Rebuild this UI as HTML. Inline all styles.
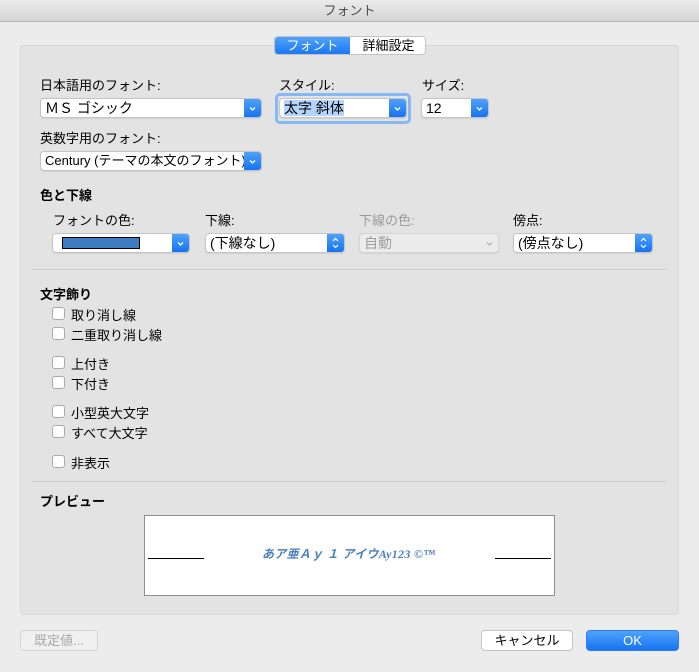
<!DOCTYPE html>
<html><head><meta charset="utf-8"><style>
*{margin:0;padding:0;box-sizing:border-box}
body{width:699px;height:672px;background:#ececec;font-family:"Liberation Sans","Noto Sans CJK JP",sans-serif;font-size:13px;color:#000;position:relative;overflow:hidden}
.a{position:absolute;white-space:nowrap}
.title{left:0;top:0;width:699px;height:22px;background:linear-gradient(#ebebeb,#d6d6d6);border-bottom:1px solid #b5b5b5;text-align:center;line-height:22px;color:#4d4d4d}
.group{left:20px;top:45px;width:659px;height:570px;background:#e3e3e3;border:1px solid #d8d8d8;border-radius:4px}
.sel{position:absolute;height:20px;background:#fff;border:1px solid #c4c4c4;border-radius:4px;line-height:18px;padding-left:4px;overflow:hidden;box-shadow:0 1px 1px rgba(0,0,0,.08);font-size:14px}
.arr{position:absolute;right:0;top:0;width:17px;height:100%;background:linear-gradient(#4fa2fb,#1673f2)}
.arr svg{position:absolute;left:4px;top:5px}
.b{font-weight:bold}
.cb{position:absolute;left:52px;width:13px;height:13px;background:#fff;border:1px solid #aaa;border-radius:3px}
.cl{position:absolute;left:71px}
.sep{position:absolute;left:32px;width:634px;height:1px;background:#cdcdcd}
.btn{position:absolute;height:21px;border:1px solid #c4c4c4;border-radius:4px;background:#fff;text-align:center;line-height:19px}
</style></head><body>
<div class="a title">フォント</div>
<div class="a group"></div>
<div class="a" style="left:274px;top:36px;width:152px;height:19px;border:1px solid #c4c4c4;border-radius:4px;background:#fff;overflow:hidden">
 <div class="a" style="left:0;top:0;width:75px;height:19px;background:linear-gradient(#4fa2fb,#1673f2);color:#fff;text-align:center;line-height:17px">フォント</div>
 <div class="a" style="left:75px;top:0;width:77px;text-align:center;line-height:17px">詳細設定</div>
</div>
<div class="a" style="left:40px;top:75px">日本語用のフォント:</div>
<div class="a" style="left:279px;top:75px">スタイル:</div>
<div class="a" style="left:422px;top:75px">サイズ:</div>
<div class="sel" style="left:40px;top:98px;width:222px">ＭＳ ゴシック<div class="arr"><svg width="9" height="9" viewBox="0 0 9 9"><path d="M2 3.5L4.5 6L7 3.5" stroke="#fff" stroke-width="1.3" fill="none"/></svg></div></div>
<div class="a" style="left:275px;top:93px;width:136px;height:31px;border:3px solid #85b8f5;border-radius:5px"></div>
<div class="sel" style="left:279px;top:98px;width:128px"><span style="background:#b3d4fc">太字 斜体</span><div class="arr"><svg width="9" height="9" viewBox="0 0 9 9"><path d="M2 3.5L4.5 6L7 3.5" stroke="#fff" stroke-width="1.3" fill="none"/></svg></div></div>
<div class="sel" style="left:421px;top:98px;width:68px">12<div class="arr"><svg width="9" height="9" viewBox="0 0 9 9"><path d="M2 3.5L4.5 6L7 3.5" stroke="#fff" stroke-width="1.3" fill="none"/></svg></div></div>
<div class="a" style="left:40px;top:128px">英数字用のフォント:</div>
<div class="sel" style="left:40px;top:151px;width:222px;font-size:13px"><span class="a" style="left:4px;width:200px;overflow:hidden">Century (テーマの本文のフォント)</span><div class="arr"><svg width="9" height="9" viewBox="0 0 9 9"><path d="M2 3.5L4.5 6L7 3.5" stroke="#fff" stroke-width="1.3" fill="none"/></svg></div></div>
<div class="a b" style="left:40px;top:185px">色と下線</div>
<div class="a" style="left:53px;top:210px">フォントの色:</div>
<div class="a" style="left:205px;top:210px">下線:</div>
<div class="a" style="left:359px;top:210px;color:#9b9b9b">下線の色:</div>
<div class="a" style="left:513px;top:210px">傍点:</div>
<div class="sel" style="left:52px;top:233px;width:138px"><div class="a" style="left:9px;top:3px;width:78px;height:12px;background:#3f7bc1;border:1px solid #000"></div><div class="arr"><svg width="9" height="9" viewBox="0 0 9 9"><path d="M2 3.5L4.5 6L7 3.5" stroke="#fff" stroke-width="1.3" fill="none"/></svg></div></div>
<div class="sel" style="left:205px;top:233px;width:140px">(下線なし)<div class="arr"><svg width="9" height="12" viewBox="0 0 9 12" style="top:3px"><path d="M2 4L4.5 1.5L7 4M2 8L4.5 10.5L7 8" stroke="#fff" stroke-width="1.2" fill="none"/></svg></div></div>
<div class="sel" style="left:359px;top:233px;width:140px;background:#ebebeb;color:#a0a0a0;border-color:#d4d4d4">自動<svg class="a" style="right:4px;top:5px" width="9" height="9" viewBox="0 0 9 9"><path d="M2 3.5L4.5 6L7 3.5" stroke="#aaa" stroke-width="1.1" fill="none"/></svg></div>
<div class="sel" style="left:513px;top:233px;width:140px">(傍点なし)<div class="arr"><svg width="9" height="12" viewBox="0 0 9 12" style="top:3px"><path d="M2 4L4.5 1.5L7 4M2 8L4.5 10.5L7 8" stroke="#fff" stroke-width="1.2" fill="none"/></svg></div></div>
<div class="sep" style="top:269px"></div>
<div class="a b" style="left:40px;top:284px">文字飾り</div>
<div class="cb" style="top:307px"></div><div class="cl" style="top:305px">取り消し線</div>
<div class="cb" style="top:327px"></div><div class="cl" style="top:325px">二重取り消し線</div>
<div class="cb" style="top:356px"></div><div class="cl" style="top:354px">上付き</div>
<div class="cb" style="top:376px"></div><div class="cl" style="top:374px">下付き</div>
<div class="cb" style="top:405px"></div><div class="cl" style="top:403px">小型英大文字</div>
<div class="cb" style="top:425px"></div><div class="cl" style="top:423px">すべて大文字</div>
<div class="cb" style="top:455px"></div><div class="cl" style="top:453px">非表示</div>
<div class="sep" style="top:481px"></div>
<div class="a b" style="left:40px;top:491px">プレビュー</div>
<div class="a" style="left:144px;top:515px;width:411px;height:81px;background:#fff;border:1px solid #8e8e8e"></div>
<div class="a" style="left:148px;top:558px;width:56px;height:1px;background:#000"></div>
<div class="a" style="left:495px;top:558px;width:56px;height:1px;background:#000"></div>
<div class="a" style="left:262px;top:545px;color:#4a7fc0;font-style:italic;font-weight:bold;font-size:12px;letter-spacing:0.3px;font-family:'Liberation Serif','Noto Sans CJK JP',serif">あア亜Ａｙ １ アイウAy123 ©™</div>
<div class="btn" style="left:20px;top:630px;width:78px;color:#aaa;border-color:#d4d4d4;background:#f0f0f0">既定値...</div>
<div class="btn" style="left:481px;top:630px;width:92px">キャンセル</div>
<div class="btn" style="left:586px;top:630px;width:93px;background:linear-gradient(#4fa2fb,#1673f2);border-color:#2a7ef0;color:#fff">OK</div>
</body></html>
